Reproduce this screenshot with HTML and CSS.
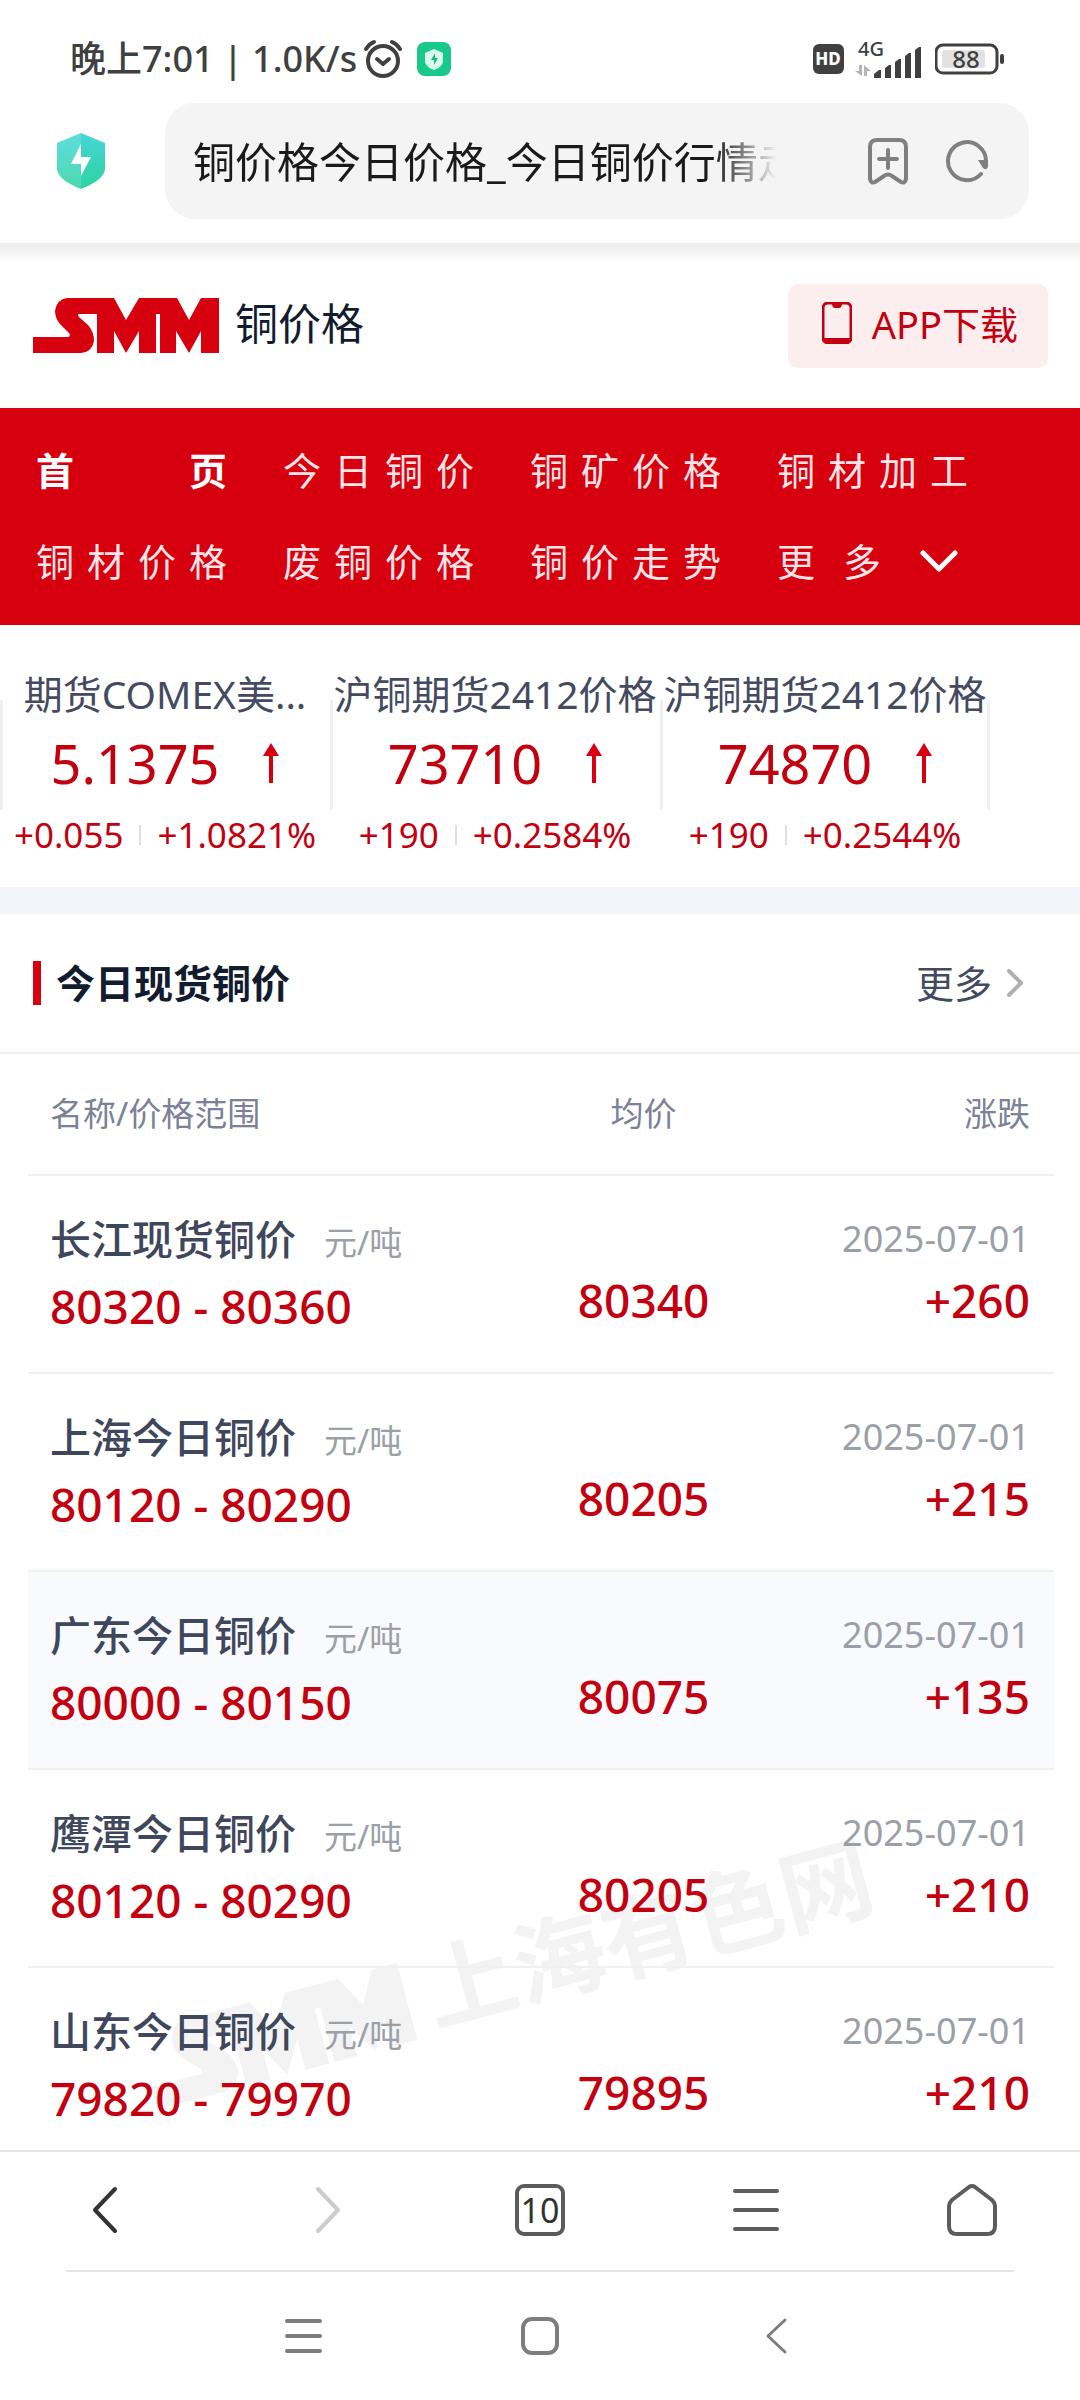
FILE: index.html
```html
<!DOCTYPE html>
<html lang="zh-CN">
<head>
<meta charset="utf-8">
<meta name="viewport" content="width=device-width, initial-scale=1">
<title>铜价格今日价格_今日铜价行情走势</title>
<link rel="stylesheet" href="styles.css">
</head>
<body>
<div class="screen">
  <div class="status">
    <span class="status-text">晚上7:01 | 1.0K/s</span>
    <svg class="status-alarm" width="40" height="40" viewBox="0 0 40 40" fill="none" stroke="#404040" stroke-width="4" stroke-linecap="round" stroke-linejoin="round"><circle cx="20" cy="22" r="15"/><path d="M14 20l6 5 6-5M3 10q3-5 8-7M37 10q-3-5-8-7"/></svg>
    <svg class="status-guard" width="34" height="34" viewBox="0 0 34 34"><rect width="34" height="34" rx="8" fill="#18c98a"/><path d="M17 7l9 4v9q-1 5-9 8q-8-3-9-8v-9z" fill="#d9fbee"/><path d="M18 11l-4 7h3v5l4-7h-3z" fill="#18b87e"/></svg>
    <div class="status-right">
      <svg width="32" height="30" viewBox="0 0 32 30"><rect width="31" height="30" rx="6" fill="#404040"/><text x="15" y="21" text-anchor="middle" class="hd">HD</text></svg>
      <svg class="signal" width="72" height="52" viewBox="0 -6 72 52"><text x="5" y="17" class="net">4G</text><g fill="#b5b5b5"><path d="M6 26h3v11L2 32h4z"/><path d="M11 37h3v-5h4l-7-6z"/></g><g fill="#404040"><path d="M21 35l5-4h2v8h-7z"/><path d="M32 29l4-3h2v13h-6z"/><path d="M42 23l4-3h2v19h-6z"/><path d="M52 17l4-3h2v25h-6z"/><path d="M62 11l4-3h2v31h-6z"/></g></svg>
      <svg class="battery" width="70" height="32" viewBox="0 0 70 32"><rect x="1" y="2" width="61" height="28" rx="7" fill="none" stroke="#404040" stroke-width="3"/><rect x="7" y="7" width="43" height="18" rx="3" fill="#e2e2e2"/><rect x="65" y="11" width="4" height="10" rx="2" fill="#404040"/><text x="31" y="25" text-anchor="middle" class="level">88</text></svg>
    </div>
  </div>

  <div class="address">
    <svg class="shield" width="48" height="56" viewBox="0 0 48 56"><defs><linearGradient id="sg" x1="0" y1="0" x2="0" y2="1"><stop offset="0" stop-color="#45d6d6"/><stop offset="1" stop-color="#2dd3a2"/></linearGradient></defs><path d="M24 0l24 10v26q-1 11-24 20Q1 47 0 36V10z" fill="url(#sg)"/><path d="M24 0v56Q1 47 0 36V10z" fill="#fff" opacity=".15"/><path d="M24 11v13h10L24 43V31H14z" fill="#fff"/></svg>
    <div class="urlbar">
      <input class="url" type="text" aria-label="地址" value="铜价格今日价格_今日铜价行情走势">
      <button class="icon-btn" aria-label="收藏"><svg width="44" height="50" viewBox="0 0 44 50" fill="none" stroke="#808080" stroke-width="4" stroke-linecap="round" stroke-linejoin="round"><path d="M4 43V11q0-7 7-7h22q7 0 7 7v32q-1 5-5 3l-9-6q-4-3-8 0l-9 6q-4 2-5-3zM22 14v18M13 23h18"/></svg></button>
      <button class="icon-btn" aria-label="刷新"><svg width="46" height="46" viewBox="0 0 46 46"><path d="M37 36A19 19 0 1 1 42 24" fill="none" stroke="#808080" stroke-width="4" stroke-linecap="round"/><path d="M34 22h10v7q-2 4-5 1z" fill="#808080"/></svg></button>
    </div>
  </div>

  <main class="page">
    <header class="site-head">
      <a class="brand" href="#">
        <svg width="186" height="55" viewBox="0 0 186 55" aria-label="SMM"><path fill="#d7000f" d="M0 39H35Q38 38 36 35L27 26Q22 20 22 13Q24 1 34 0H81L93 22L106 0H144L156 22L168 0H186V55H168V33L156 55L143 33V55H127V16H123V55H106V33L93 55L81 33V55H64V16H46Q44 17 46 19L55 27Q61 34 61 43Q59 54 48 55H0Z"/></svg>
        <span>铜价格</span>
      </a>
      <a class="app-btn" href="#">
        <svg width="30" height="42" viewBox="0 0 30 42"><rect x="1" y="1" width="28" height="40" rx="5" fill="none" stroke="#c3000f" stroke-width="3"/><path d="M10 1h10q0 5-3 5h-4q-3 0-3-5zM1 36h28q0 5-5 5H6q-5 0-5-5z" fill="#c3000f"/></svg>
        <span>APP下载</span>
      </a>
    </header>

    <nav class="nav">
      <a class="active" href="#">首页</a>
      <a href="#">今日铜价</a>
      <a href="#">铜矿价格</a>
      <a href="#">铜材加工</a>
      <a href="#">铜材价格</a>
      <a href="#">废铜价格</a>
      <a href="#">铜价走势</a>
      <button class="nav-more"><span>更多</span><svg width="38" height="22" viewBox="0 0 38 22" fill="none" stroke="#fff" stroke-width="5" stroke-linecap="round" stroke-linejoin="round"><path d="M3 3l16 16L35 3"/></svg></button>
    </nav>

    <ul class="ticker">
      <li class="tick">
        <div class="tick-name">期货COMEX美...</div>
        <div class="tick-price"><span>5.1375</span><svg width="16" height="40" viewBox="0 0 16 40"><path d="M8 0l8 13h-6v27H6V13H0z" fill="#d7000f"/></svg></div>
        <div class="tick-change"><span>+0.055</span><i></i><span>+1.0821%</span></div>
      </li>
      <li class="tick">
        <div class="tick-name">沪铜期货2412价格</div>
        <div class="tick-price"><span>73710</span><svg width="16" height="40" viewBox="0 0 16 40"><path d="M8 0l8 13h-6v27H6V13H0z" fill="#d7000f"/></svg></div>
        <div class="tick-change"><span>+190</span><i></i><span>+0.2584%</span></div>
      </li>
      <li class="tick">
        <div class="tick-name">沪铜期货2412价格</div>
        <div class="tick-price"><span>74870</span><svg width="16" height="40" viewBox="0 0 16 40"><path d="M8 0l8 13h-6v27H6V13H0z" fill="#d7000f"/></svg></div>
        <div class="tick-change"><span>+190</span><i></i><span>+0.2544%</span></div>
      </li>
    </ul>

    <section class="spot">
      <div class="spot-head">
        <h2>今日现货铜价</h2>
        <a href="#">更多<svg width="17" height="28" viewBox="0 0 17 28" fill="none" stroke="#b0b0b0" stroke-width="4" stroke-linecap="round" stroke-linejoin="round"><path d="M3 2l12 12L3 26"/></svg></a>
      </div>
      <div class="quotes">
        <svg class="watermark" width="780" height="320" viewBox="0 0 780 320"><g transform="translate(17 290) rotate(-15)" fill="#f3f3f3"><g transform="translate(0 -80) scale(1.45)"><path d="M0 39H35Q38 38 36 35L27 26Q22 20 22 13Q24 1 34 0H81L93 22L106 0H144L156 22L168 0H186V55H168V33L156 55L143 33V55H127V16H123V55H106V33L93 55L81 33V55H64V16H46Q44 17 46 19L55 27Q61 34 61 43Q59 54 48 55H0Z"/></g><text x="290" y="-9" class="mark">上海有色网</text></g></svg>
        <table>
          <thead>
            <tr><th scope="col">名称/价格范围</th><th scope="col">均价</th><th scope="col">涨跌</th></tr>
          </thead>
          <tbody>
            <tr><td><div class="name">长江现货铜价<small>元/吨</small></div><div class="num">80320 - 80360</div></td><td class="num">80340</td><td><div class="date">2025-07-01</div><div class="num">+260</div></td></tr>
            <tr><td><div class="name">上海今日铜价<small>元/吨</small></div><div class="num">80120 - 80290</div></td><td class="num">80205</td><td><div class="date">2025-07-01</div><div class="num">+215</div></td></tr>
            <tr class="hot"><td><div class="name">广东今日铜价<small>元/吨</small></div><div class="num">80000 - 80150</div></td><td class="num">80075</td><td><div class="date">2025-07-01</div><div class="num">+135</div></td></tr>
            <tr><td><div class="name">鹰潭今日铜价<small>元/吨</small></div><div class="num">80120 - 80290</div></td><td class="num">80205</td><td><div class="date">2025-07-01</div><div class="num">+210</div></td></tr>
            <tr><td><div class="name">山东今日铜价<small>元/吨</small></div><div class="num">79820 - 79970</div></td><td class="num">79895</td><td><div class="date">2025-07-01</div><div class="num">+210</div></td></tr>
          </tbody>
        </table>
      </div>
    </section>
  </main>

  <div class="toolbar">
    <button aria-label="后退"><svg width="56" height="56" viewBox="0 0 56 56" fill="none" stroke="#333" stroke-width="4" stroke-linecap="round" stroke-linejoin="round"><path d="M35 7L15 28l20 21"/></svg></button>
    <button aria-label="前进"><svg width="56" height="56" viewBox="0 0 56 56" fill="none" stroke="#ccc" stroke-width="4" stroke-linecap="round" stroke-linejoin="round"><path d="M22 7l20 21-20 21"/></svg></button>
    <button aria-label="标签页"><span class="tabs">10</span></button>
    <button aria-label="菜单"><svg width="56" height="56" viewBox="0 0 56 56" fill="none" stroke="#5c5c5c" stroke-width="4" stroke-linecap="round"><path d="M7 9h42M7 28h42M7 47h42"/></svg></button>
    <button aria-label="主页"><svg width="56" height="56" viewBox="0 0 56 56" fill="none" stroke="#5c5c5c" stroke-width="4" stroke-linejoin="round"><path d="M25 5q3-2 6 0l17 13q3 3 3 6v20q0 8-8 8H13q-8 0-8-8V24q0-3 3-6z"/></svg></button>
  </div>
  <div class="sysnav">
    <button aria-label="最近任务"><svg width="40" height="40" viewBox="0 0 40 40" fill="none" stroke="#7d7d7d" stroke-width="4" stroke-linecap="round"><path d="M4 5h33M4 20h33M4 35h33"/></svg></button>
    <button aria-label="桌面"><svg width="40" height="40" viewBox="0 0 40 40" fill="none" stroke="#7d7d7d" stroke-width="4"><rect x="3" y="3" width="34" height="34" rx="9"/></svg></button>
    <button aria-label="返回"><svg width="40" height="40" viewBox="0 0 40 40" fill="none" stroke="#7d7d7d" stroke-width="3" stroke-linecap="round" stroke-linejoin="round"><path d="M28 4L11 20l17 16"/></svg></button>
  </div>
</div>
</body>
</html>
```
FILE: styles.css
```css
* { box-sizing: border-box; }

body {
  margin: 0;
  background: #fff;
  color: #131b2e;
  font-family: "Noto Sans", "Noto Sans CJK SC", sans-serif;
}

a { color: inherit; text-decoration: none; }
svg { display: block; flex: none; }

button {
  display: flex;
  align-items: center;
  justify-content: center;
  padding: 0;
  border: 0;
  background: none;
  color: inherit;
  font: inherit;
}

.screen {
  display: flex;
  flex-direction: column;
  height: 100vh;
}

/* phone status line */
.status {
  display: flex;
  align-items: center;
  flex: none;
  height: 103px;
  padding: 15px 75px 0 70px;
  color: #404040;
}
.status-text { font-size: 36px; font-weight: 500; line-height: 48px; }
.status-alarm { margin-left: 6px; }
.status-guard { margin-left: 14px; }
.status-right { display: flex; align-items: center; margin-left: auto; }
.signal { margin-left: 8px; }
.battery { margin-left: 10px; }
.hd { fill: #fff; font-size: 17px; font-weight: 800; }
.net { fill: #404040; font-size: 20px; font-weight: 500; }
.level { fill: #404040; font-size: 24px; font-weight: 500; }

/* browser address bar */
.address {
  display: flex;
  align-items: center;
  flex: none;
  gap: 60px;
  padding: 0 51px 24px 57px;
}
.urlbar {
  display: flex;
  align-items: center;
  flex: 1;
  height: 116px;
  padding: 0 39px 0 28px;
  border-radius: 30px;
  background: #f4f4f4;
}
.url {
  width: 584px;
  min-width: 0;
  height: 64px;
  padding: 0 0 4px;
  border: 0;
  outline: 0;
  background: none;
  color: #1a1a1a;
  font: 42px/60px "Noto Sans", "Noto Sans CJK SC", sans-serif;
  -webkit-mask-image: linear-gradient(to left, transparent, #000 64px);
  mask-image: linear-gradient(to left, transparent, #000 64px);
}
.icon-btn { margin-left: auto; }
.icon-btn + .icon-btn { margin-left: 34px; }

.page {
  flex: 1;
  min-height: 0;
  overflow-y: auto;
  scrollbar-width: none;
}

/* site header */
.site-head {
  display: flex;
  align-items: center;
  justify-content: space-between;
  height: 165px;
  padding: 0 32px 0 33px;
  background: linear-gradient(#ebebeb, #fff 20px);
}
.brand { display: flex; align-items: center; gap: 16px; font-size: 43px; line-height: 64px; }
.brand span, .app-btn span { padding-bottom: 4px; }
.app-btn {
  display: flex;
  align-items: center;
  gap: 20px;
  height: 84px;
  padding: 0 30px 0 34px;
  border-radius: 10px;
  background: #fceeee;
  color: #c3000f;
  font-size: 38px;
  line-height: 56px;
}
.app-btn svg { margin-bottom: 6px; }

/* category navigation */
.nav {
  display: grid;
  grid-template-columns: repeat(4, 191px);
  gap: 35px 56px;
  padding: 34px 36px 36px;
  background: #d7000f;
  color: #ffe5e7;
  font-size: 38px;
  line-height: 56px;
}
.nav a { text-align: justify; text-align-last: justify; }
.nav .active { color: #fff; font-weight: 700; }
.nav-more { justify-content: space-between; padding-right: 10px; }
.nav-more span { width: 104px; text-align-last: justify; }

/* futures ticker */
.ticker {
  display: flex;
  height: 262px;
  margin: 0;
  padding: 41px 0 0;
  list-style: none;
  color: #c3000f;
}
.tick {
  flex: none;
  width: 330px;
  background: linear-gradient(#f0f0f0, #f0f0f0) 0 34px / 3px 110px no-repeat;
}
.tick:last-child {
  background:
    linear-gradient(#f0f0f0, #f0f0f0) 0 34px / 3px 110px no-repeat,
    linear-gradient(#f0f0f0, #f0f0f0) 100% 34px / 3px 110px no-repeat;
}
.tick-name { color: #444b60; font-size: 39px; line-height: 56px; text-align: center; white-space: nowrap; }
.tick-price {
  display: flex;
  align-items: center;
  justify-content: center;
  gap: 44px;
  font-size: 54px;
  line-height: 82px;
}
.tick-change {
  display: flex;
  align-items: center;
  justify-content: center;
  gap: 16px;
  font-size: 35px;
  line-height: 62px;
}
.tick-change i { width: 2px; height: 20px; background: #dcdfe3; }

/* spot prices */
.spot { border-top: 27px solid #f2f6fa; }
.spot-head {
  display: flex;
  align-items: center;
  justify-content: space-between;
  height: 140px;
  padding: 0 57px 0 33px;
  border-bottom: 2px solid #f0f0f0;
}
.spot-head h2 {
  display: flex;
  align-items: center;
  gap: 15px;
  margin: 0;
  font-size: 39px;
  font-weight: 600;
  line-height: 56px;
}
.spot-head h2::before { width: 8px; height: 44px; background: #d7000f; content: ""; }
.spot-head a { display: flex; align-items: center; gap: 14px; color: #444b60; font-size: 38px; line-height: 56px; }

.quotes { position: relative; isolation: isolate; padding: 0 26px 0 28px; }
.watermark { position: absolute; z-index: -1; top: 766px; left: 140px; }
.mark { font-size: 92px; font-weight: 700; }

table { width: 100%; border-collapse: separate; border-spacing: 0; table-layout: fixed; }
th, td { padding: 0; border-bottom: 2px solid #f0f0f0; text-align: center; vertical-align: top; }
th { width: 32%; height: 122px; color: #7b8196; font-size: 33px; font-weight: 400; line-height: 120px; }
th:first-child { width: 44%; }
th:last-child { width: 24%; }
th:first-child, td:first-child { padding-left: 22px; text-align: left; }
th:last-child, td:last-child { padding-right: 24px; text-align: right; }
td { height: 198px; padding-top: 32px; }
td:nth-child(2) { padding-top: 92px; }
.name { color: #3f475c; font-size: 41px; font-weight: 500; line-height: 62px; white-space: nowrap; }
.name small { margin-left: 28px; color: #9b9fa8; font-size: 33px; font-weight: 400; }
.num { color: #c3000f; font-size: 46px; font-weight: 500; line-height: 64px; white-space: nowrap; }
.date { padding-top: 2px; color: #9b9fa8; font-size: 36px; line-height: 58px; white-space: nowrap; }
.hot td { background: #f8fafd; }

/* browser toolbar */
.toolbar {
  display: grid;
  grid-template-columns: repeat(5, 1fr);
  flex: none;
  height: 120px;
  padding-bottom: 2px;
  border-top: 2px solid #e5e5e5;
}
.tabs {
  width: 50px;
  height: 52px;
  border: 4px solid #5c5c5c;
  border-radius: 9px;
  color: #333;
  font-size: 34px;
  line-height: 44px;
}

/* system navigation */
.sysnav {
  display: grid;
  grid-template-columns: repeat(3, 1fr);
  flex: none;
  height: 130px;
  margin: 0 66px;
  padding: 0 118px;
  border-top: 2px solid #e5e5e5;
}
```
